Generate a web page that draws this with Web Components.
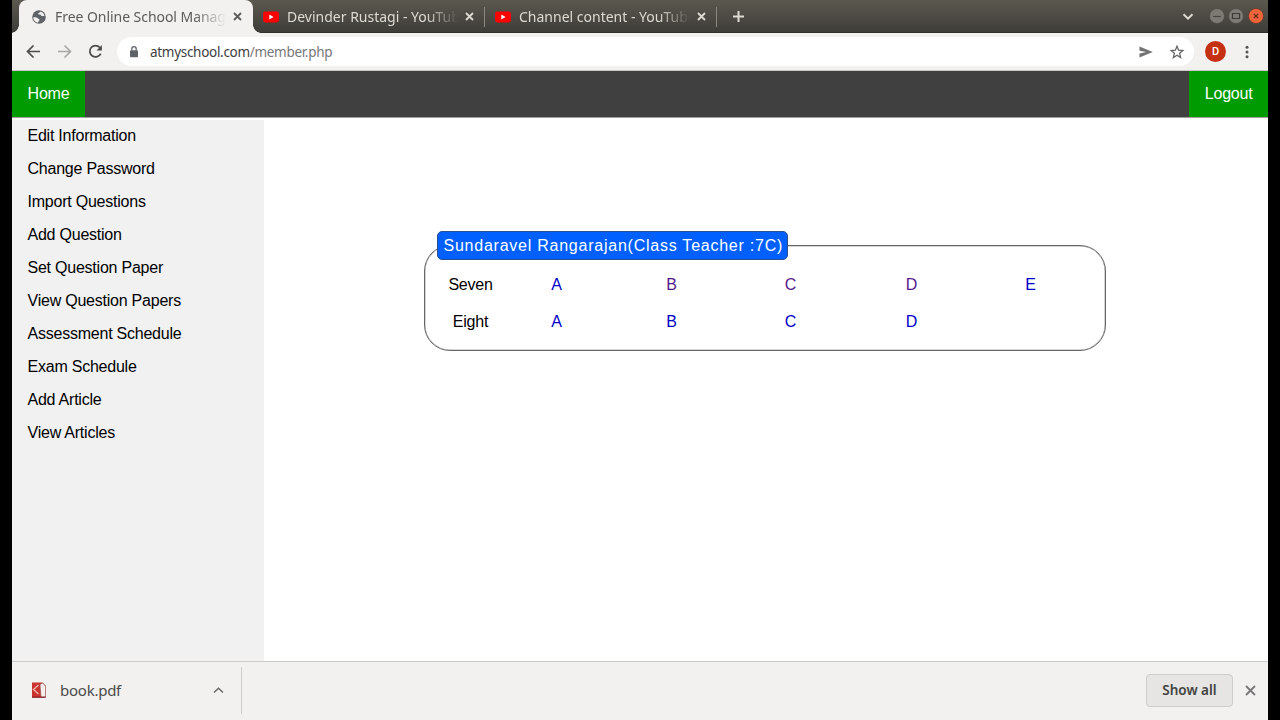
<!DOCTYPE html>
<html lang="en">
<head>
<meta charset="utf-8">
<title>Free Online School Management</title>
<style>
    html, body {
        margin: 0;
        height: 100%;
        background: #000;
        overflow: hidden;
    }
</style>
</head>
<body>
<school-window></school-window>

<template id="browser-tab">
    <style>
        :host {
            display: flex;
            box-sizing: border-box;
            width: 232px;
            height: 33px;
            align-items: center;
            padding: 0 10px 0 10px;
            color: #dfdbd2;
            position: relative;
        }
        :host([active]) {
            width: 234px;
            padding-left: 12px;
            padding-right: 10px;
            background: #f2f1f0;
            color: #5b5b59;
            border-radius: 8px 8px 0 0;
        }
        /* flared feet of the selected tab */
        :host([active])::before,
        :host([active])::after {
            content: '';
            position: absolute;
            bottom: 0;
            width: 8px;
            height: 8px;
        }
        :host([active])::before {
            left: -8px;
            background: radial-gradient(circle at 0 0, transparent 7.5px, #f2f1f0 8px);
        }
        :host([active])::after {
            right: -8px;
            background: radial-gradient(circle at 100% 0, transparent 7.5px, #f2f1f0 8px);
        }
        slot[name="icon"] {
            display: block;
        }
        ::slotted(svg) {
            display: block;
            flex: none;
        }
        .title {
            flex: 1;
            margin-left: 8px;
            margin-right: 6px;
            overflow: hidden;
            white-space: nowrap;
            line-height: 22px;
            letter-spacing: var(--spacing, 0);
            -webkit-mask-image: linear-gradient(to right, #000 calc(100% - 32px), transparent 100%);
            mask-image: linear-gradient(to right, #000 calc(100% - 32px), transparent 100%);
        }
        .close {
            display: block;
            flex: none;
        }
        .rule {
            position: absolute;
            right: 0;
            top: 7px;
            width: 1px;
            height: 20px;
            background: #8b887e;
        }
        :host([active]) .rule {
            display: none;
        }
    </style>
    <slot name="icon"></slot>
    <div class="title"><slot></slot></div>
    <svg class="close" width="11" height="11" viewBox="0 0 11 11" fill="none" stroke="currentColor" stroke-width="1.8"><path d="M2 2l7 7M9 2l-7 7"/></svg>
    <span class="rule"></span>
</template>

<template id="tab-strip">
    <style>
        :host {
            display: flex;
            height: 33px;
            box-sizing: border-box;
            padding: 0 4.5px 0 7px;
            background: linear-gradient(#5b584f, #3d3c37);
            box-shadow: inset 0 -1px #302f2c;
            font: 14px/20px "Noto Sans", sans-serif;
            color: #dfdbd2;
        }
        .fill {
            flex: 1;
        }
        svg {
            display: block;
        }
        .plus {
            margin: 10px 0 0 15px;
        }
        .chevron {
            margin: 10px 15px 0 0;
        }
        .buttons {
            display: flex;
            gap: 3.5px;
            margin-top: 8px;
        }
    </style>
    <browser-tab active style="--spacing: -0.05px">
        <svg slot="icon" width="16" height="16" viewBox="0 0 16 16"><circle cx="8" cy="8" r="6.8" fill="#5f6368"/><path d="M2.2 8.2c1.8 0 3.4-.3 4.3.8.9 1.2 2.1.7 2 2-.1 1-1.2.9-1.5 2.7C4 13.2 2.2 11 2.2 8.2zM9.5 2.5c-.1 1.500-1.800.8-2.200 1.900-.3 1 .8 1.300 1.600 1.200 1.100-.1.900 1.300 2 1.500 1 .2 1.800-.3 2.600.2C13.300 5 11.800 3.200 9.500 2.500z" fill="#f2f1f0"/></svg>
        Free Online School Management
    </browser-tab>
    <browser-tab>
        <svg slot="icon" width="16" height="16" viewBox="0 0 16 16"><rect x="0" y="2.5" width="16" height="11" rx="2.4" fill="#f00"/><path d="M6.3 5.6v4.8L10.6 8z" fill="#fff"/></svg>
        Devinder Rustagi - YouTube Studio
    </browser-tab>
    <browser-tab>
        <svg slot="icon" width="16" height="16" viewBox="0 0 16 16"><rect x="0" y="2.5" width="16" height="11" rx="2.4" fill="#f00"/><path d="M6.3 5.6v4.8L10.6 8z" fill="#fff"/></svg>
        Channel content - YouTube Studio
    </browser-tab>
    <svg class="plus" width="13" height="13" viewBox="0 0 13 13" stroke="currentColor" stroke-width="2"><path d="M6.5 1v11M1 6.5h11"/></svg>
    <div class="fill"></div>
    <svg class="chevron" width="12" height="12" viewBox="0 0 12 12" fill="none" stroke="currentColor" stroke-width="2"><path d="M1.5 4.2L6 8.6l4.5-4.4"/></svg>
    <div class="buttons">
        <svg width="16" height="16" viewBox="0 0 16 16"><circle cx="8" cy="8" r="7.5" fill="#7c7a73" stroke="#4a4943" stroke-width=".7"/><path d="M4.2 8.5h7.6" stroke="#45443f" stroke-width="1.2"/></svg>
        <svg width="16" height="16" viewBox="0 0 16 16"><circle cx="8" cy="8" r="7.5" fill="#7c7a73" stroke="#4a4943" stroke-width=".7"/><path d="M4.5 5.5h7v5h-7z" fill="none" stroke="#3c3b37" stroke-width="1.2"/></svg>
        <svg width="16" height="16" viewBox="0 0 16 16"><circle cx="8" cy="8" r="7.5" fill="#f0643c" stroke="#5a3528" stroke-width=".7"/><path d="M5.8 5.8l4.4 4.4M10.2 5.8l-4.4 4.4" stroke="#5c2a1a" stroke-width="1.2"/></svg>
    </div>
</template>

<template id="address-bar">
    <style>
        :host {
            display: flex;
            align-items: center;
            box-sizing: border-box;
            height: 38px;
            padding: 0 14px 0 14px;
            background: #f2f1f0;
            border-bottom: 1px solid #c9c8c6;
            color: #4c4c4a;
            font: 13.5px/20px "Noto Sans", sans-serif;
        }
        svg {
            display: block;
            flex: none;
        }
        .nav {
            display: flex;
            gap: 16px;
        }
        .dim {
            color: #a9a8a6;
        }
        .url {
            display: flex;
            align-items: center;
            box-sizing: border-box;
            flex: 1;
            height: 29px;
            margin: 0 11px 0 14px;
            padding: 0 9px 0 11px;
            border-radius: 15px;
            background: #fff;
        }
        .text {
            flex: 1;
            margin-left: 10px;
            color: #77777a;
            white-space: nowrap;
            letter-spacing: -0.3px;
        }
        .text b {
            font-weight: 400;
            color: #404043;
        }
        .star {
            margin-left: 16px;
        }
        .avatar {
            width: 21px;
            height: 21px;
            border-radius: 50%;
            background: #c53013;
            color: #fff;
            font: 500 11px/21px Roboto, sans-serif;
            text-align: center;
            margin-right: 14px;
        }
    </style>
    <div class="nav">
        <svg width="15" height="15" viewBox="0 0 15 15" fill="none" stroke="currentColor" stroke-width="1.7"><path d="M14 7.5H1.8M7.5 1.5l-6 6 6 6"/></svg>
        <svg class="dim" width="15" height="15" viewBox="0 0 15 15" fill="none" stroke="currentColor" stroke-width="1.7"><path d="M1 7.5h12.2M7.5 1.5l6 6-6 6"/></svg>
        <svg width="15" height="15" viewBox="0 0 15 15" fill="none" stroke="currentColor" stroke-width="1.8"><path d="M12.7 9.6a5.7 5.7 0 1 1-.9-6.1l1.2 1.3"/><path d="M13.9 1v5.4H8.5z" fill="currentColor" stroke="none"/></svg>
    </div>
    <div class="url">
        <svg width="12" height="14" viewBox="0 0 12 14"><rect x="2" y="5.2" width="8" height="7" rx="1" fill="#5f6368"/><path d="M3.8 5.5V3.9a2.2 2.2 0 0 1 4.4 0v1.6" fill="none" stroke="#5f6368" stroke-width="1.3"/></svg>
        <div class="text"><b>atmyschool.com</b>/member.php</div>
        <svg width="14" height="14" viewBox="0 0 14 14"><path d="M.5 1.6L13.8 7 .5 12.6V8.4L7.2 7 .5 5.7z" fill="#737373"/></svg>
        <svg class="star" width="16" height="16" viewBox="0 0 16 16" fill="none" stroke="#666" stroke-width="1.3"><path d="M8 2.2l1.6 4 4.3.3-3.3 2.8 1 4.2L8 11.2l-3.6 2.3 1-4.2L2.1 6.5l4.3-.3z"/></svg>
    </div>
    <div class="avatar">D</div>
    <svg width="14" height="14" viewBox="0 0 14 14" fill="#555"><circle cx="7" cy="2.2" r="1.5"/><circle cx="7" cy="7" r="1.5"/><circle cx="7" cy="11.8" r="1.5"/></svg>
</template>

<template id="top-nav">
    <style>
        :host {
            display: flex;
            justify-content: space-between;
            height: 46px;
            border-bottom: 1px solid #9f9f9f;
            background: #404040;
        }
        a {
            padding: 0 15.6px;
            background: #009b00;
            color: #fff;
            line-height: 46px;
            text-decoration: none;
        }
    </style>
    <a href="#">Home</a>
    <a href="#">Logout</a>
</template>

<template id="side-menu">
    <style>
        :host {
            display: block;
            flex: none;
            width: 251.6px;
            margin-top: 2px;
            background: #f1f1f1;
        }
        nav {
            margin-top: -1px;
        }
        a {
            display: block;
            padding-left: 15.5px;
            line-height: 33px;
            color: #000;
            text-decoration: none;
        }
    </style>
    <nav></nav>
</template>

<template id="class-panel">
    <style>
        :host {
            display: block;
            box-sizing: border-box;
            width: 682px;
        }
        fieldset {
            box-sizing: border-box;
            height: 120px;
            margin: 0;
            padding: 0 15px 0 12px;
            border: 1px solid #666;
            border-radius: 26px;
            box-shadow: inset 0 0 0 .5px #aaa;
        }
        legend {
            box-sizing: border-box;
            width: 351px;
            height: 29px;
            padding: 0 4px 0 5.5px;
            border: 1px solid #2b4f8c;
            border-radius: 5px;
            background: #0060ff;
            color: #fff;
            line-height: 27px;
            letter-spacing: 0.76px;
            white-space: nowrap;
        }
        .grid {
            display: grid;
            grid-template-columns: 59px 113px 117px 121px 121px 117px;
            grid-auto-rows: 37px;
            margin: 6px 0 0 4px;
            line-height: 38px;
            text-align: center;
        }
        a {
            color: #0000c8;
            text-decoration: none;
        }
        a.visited {
            color: #551a8b;
        }
    </style>
    <fieldset>
        <legend><slot></slot></legend>
        <div class="grid"></div>
    </fieldset>
</template>

<template id="download-shelf">
    <style>
        :host {
            display: flex;
            align-items: center;
            box-sizing: border-box;
            height: 59.5px;
            padding-right: 12px;
            background: #f2f1f0;
            border-top: 1px solid #cdcbc9;
            color: #4a4a48;
            font: 15px/20px "Noto Sans", sans-serif;
        }
        .item {
            display: flex;
            align-items: center;
            box-sizing: border-box;
            width: 230px;
            height: 47px;
            padding: 0 17px 0 19px;
            border-right: 1px solid #cdcbc9;
        }
        .name {
            flex: 1;
            margin-left: 13px;
            margin-top: -1px;
            letter-spacing: -0.25px;
        }
        .fill {
            flex: 1;
        }
        .item svg {
            margin-top: -1px;
        }
        button {
            box-sizing: border-box;
            width: 87px;
            height: 33px;
            padding: 0;
            margin-top: -1px;
            margin-right: 12px;
            border: 1px solid #cfcdcb;
            border-radius: 4px;
            background: #e6e5e3;
            color: #434341;
            font: 600 13.5px/20px "Noto Sans", sans-serif;
        }
        svg {
            display: block;
            margin-top: -1px;
        }
    </style>
    <div class="item">
        <svg width="16" height="16" viewBox="0 0 16 16"><path d="M1 .5h10.5l3 3v12H1z" fill="#c9342f"/><path d="M9 2.5L11.500 1l3 3v11H10z" fill="#f7eeee" stroke="#8d4949" stroke-width=".6"/><path d="M7.500 3L2.500 7.500l5 4.500" fill="none" stroke="#f3b6b1" stroke-width="1.3"/><path d="M1 15.2h13.5" stroke="#7c1719"/></svg>
        <span class="name">book.pdf</span>
        <svg width="11" height="11" viewBox="0 0 11 11" fill="none" stroke="#666" stroke-width="1.4"><path d="M1 7.6l4.5-4.3L10 7.6"/></svg>
    </div>
    <div class="fill"></div>
    <button>Show all</button>
    <svg width="11" height="11" viewBox="0 0 11 11" fill="none" stroke="#777" stroke-width="1.8"><path d="M1 1l9 9M10 1l-9 9"/></svg>
</template>

<template id="school-window">
    <style>
        :host {
            display: flex;
            flex-direction: column;
            width: 1256px;
            height: 720px;
            margin: 0 auto;
            background: #fff;
            font: 16px/18px "Liberation Sans", Arial, sans-serif;
        }
        top-nav,
        .page {
            letter-spacing: -0.23px;
        }
        .page {
            display: flex;
            flex: 1;
        }
        main {
            flex: 1;
            display: flex;
            align-items: flex-start;
            padding: 113px 0 0 160.4px;
        }
    </style>
    <tab-strip></tab-strip>
    <address-bar></address-bar>
    <top-nav></top-nav>
    <div class="page">
        <side-menu></side-menu>
        <main><class-panel>Sundaravel Rangarajan(Class Teacher :7C)</class-panel></main>
    </div>
    <download-shelf></download-shelf>
</template>

<script>
/**
 * Base: clones the template whose id is the tag name.
 */
class TemplateElement extends HTMLElement {
    constructor () {
        super();
        this.attachShadow({ mode: 'open' });
        const template = document.getElementById(this.localName);
        this.shadowRoot.appendChild(template.content.cloneNode(true));
    }
}

class BrowserTab extends TemplateElement {}
class TabStrip extends TemplateElement {}
class AddressBar extends TemplateElement {}
class TopNav extends TemplateElement {}
class DownloadShelf extends TemplateElement {}
class SchoolWindow extends TemplateElement {}

class SideMenu extends TemplateElement {
    connectedCallback () {
        const items = [
            'Edit Information', 'Change Password', 'Import Questions', 'Add Question',
            'Set Question Paper', 'View Question Papers', 'Assessment Schedule',
            'Exam Schedule', 'Add Article', 'View Articles'
        ];
        const nav = this.shadowRoot.querySelector('nav');
        items.forEach((text) => {
            const link = document.createElement('a');
            link.href = '#';
            link.textContent = text;
            nav.appendChild(link);
        });
    }
}

class ClassPanel extends TemplateElement {
    connectedCallback () {
        this._addRow('Seven', ['A', 'B', 'C', 'D', 'E'], ['B', 'C', 'D']);
        this._addRow('Eight', ['A', 'B', 'C', 'D'], []);
    }

    /**
      * One class with a link for each of its sections.
      * @param {String} name
      * @param {Array} sections
      * @param {Array} visited Sections already opened
      */
    _addRow (name, sections, visited) {
        const grid = this.shadowRoot.querySelector('.grid');
        const label = document.createElement('span');
        label.textContent = name;
        label.style.gridColumn = '1';
        grid.appendChild(label);
        sections.forEach((section) => {
            const link = document.createElement('a');
            link.href = `#${name}${section}`;
            link.textContent = section;
            link.classList.toggle('visited', visited.includes(section));
            grid.appendChild(link);
        });
    }
}

customElements.define('browser-tab', BrowserTab);
customElements.define('tab-strip', TabStrip);
customElements.define('address-bar', AddressBar);
customElements.define('top-nav', TopNav);
customElements.define('side-menu', SideMenu);
customElements.define('class-panel', ClassPanel);
customElements.define('download-shelf', DownloadShelf);
customElements.define('school-window', SchoolWindow);
</script>
</body>
</html>
